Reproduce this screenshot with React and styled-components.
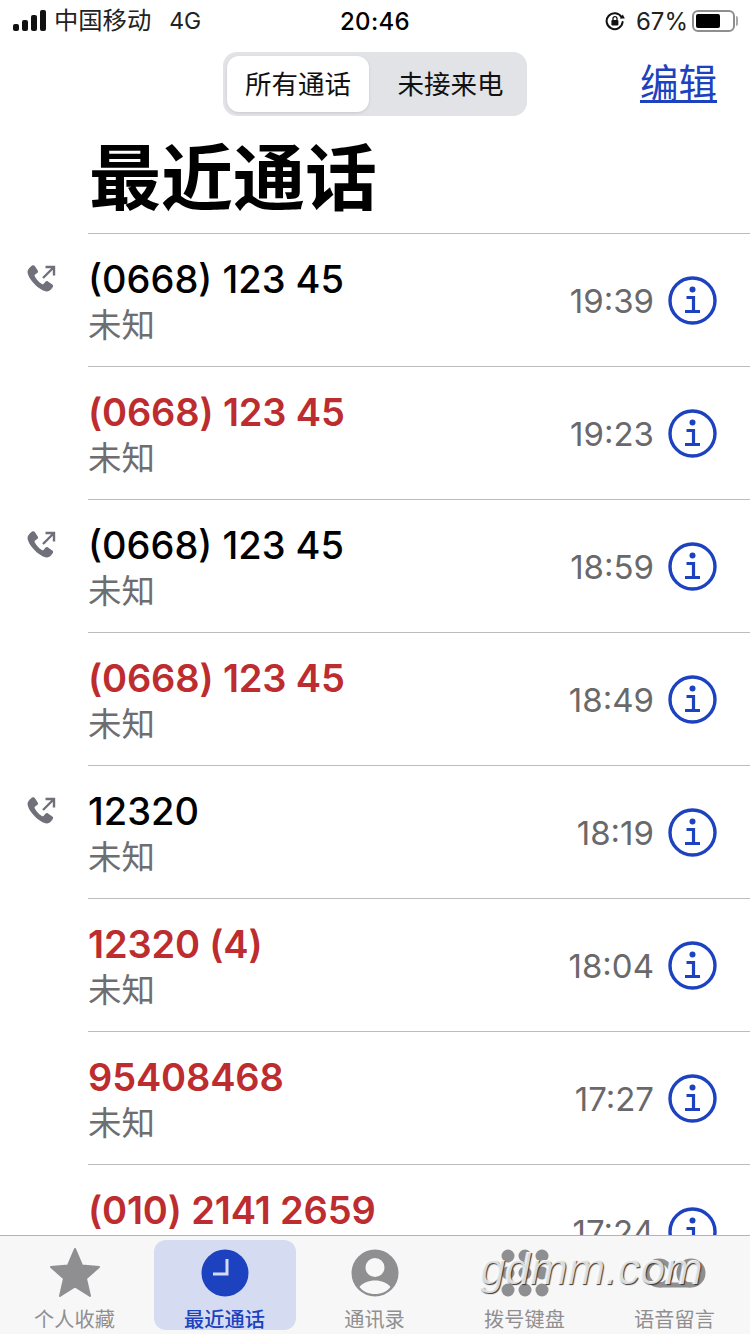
import styled, { createGlobalStyle } from "styled-components";

const GlobalStyle = createGlobalStyle`
  html, body {
    margin: 0;
    padding: 0;
    background: #fff;
  }
  * {
    box-sizing: border-box;
  }
`;

const FONT = `Inter, "Noto Sans CJK SC", sans-serif`;
const BLUE = "#1c42c0";
const RED = "#bd2c2e";

const CALLS = [
  { name: "(0668) 123 45", time: "19:39", outgoing: true },
  { name: "(0668) 123 45", time: "19:23", missed: true },
  { name: "(0668) 123 45", time: "18:59", outgoing: true },
  { name: "(0668) 123 45", time: "18:49", missed: true },
  { name: "12320", time: "18:19", outgoing: true },
  { name: "12320 (4)", time: "18:04", missed: true },
  { name: "95408468", time: "17:27", missed: true },
  { name: "(010) 2141 2659", time: "17:24", missed: true },
];

const Screen = styled.div`
  position: relative;
  display: flex;
  flex-direction: column;
  width: 750px;
  height: 1334px;
  overflow: hidden;
  background: #fff;
  font-family: ${FONT};
  color: #000;
`;

const StatusBar = styled.div`
  display: grid;
  grid-template-columns: 1fr auto 1fr;
  align-items: center;
  height: 42px;
  padding: 0 13px 0 13px;
  font-size: 24px;
`;

const StatusLeft = styled.div`
  display: flex;
  align-items: center;
`;

const Carrier = styled.span`
  margin: 0 0 5px 7px;
  font-size: 24.300px;
  color: #222;
`;

const Network = styled.span`
  margin-left: 18px;
  font-size: 23px;
  color: #222;
`;

const Clock = styled.span`
  font-size: 24px;
  font-weight: 500;
  letter-spacing: 0.3px;
`;

const StatusRight = styled.div`
  display: flex;
  align-items: center;
  justify-content: flex-end;
`;

const Percent = styled.span`
  margin: 0 4px 0 11px;
  font-size: 24px;
  color: #222;
`;

const Battery = styled.div`
  position: relative;
  width: 43px;
  height: 22px;
  padding: 2px;
  border: 2px solid #8e8e90;
  border-radius: 6px;
  margin-right: 2px;

  &::before {
    content: "";
    display: block;
    width: 24px;
    height: 14px;
    border-radius: 2px;
    background: #000;
  }

  &::after {
    content: "";
    position: absolute;
    top: 4px;
    right: -5px;
    width: 2px;
    height: 10px;
    border-radius: 0 2px 2px 0;
    background: #a8a8aa;
  }
`;

const NavBar = styled.div`
  display: flex;
  align-items: flex-start;
  height: 74px;
  padding: 10px 33px 0 223px;
  justify-content: space-between;
`;

const Segments = styled.div`
  display: flex;
  width: 304px;
  height: 64px;
  padding: 4px;
  border-radius: 14px;
  background: #e2e3e6;
`;

const Segment = styled.div`
  display: flex;
  align-items: center;
  justify-content: center;
  width: ${({ $active }) => ($active ? "142px" : "154px")};
  padding: ${({ $active }) => ($active ? "0 0 4px" : "0 0 4px 9px")};
  border-radius: 12px;
  font-size: 26.500px;
  color: #111;
  background: ${({ $active }) => ($active ? "#fff" : "transparent")};
  box-shadow: ${({ $active }) =>
    $active ? "0 1px 3px rgba(0, 0, 0, 0.12)" : "none"};
`;

const EditLink = styled.a`
  font-size: 38.500px;
  line-height: 63px;
  color: ${BLUE};
  text-decoration: underline;
  text-decoration-thickness: 3px;
  text-underline-offset: 3px;
`;

const Title = styled.h1`
  margin: 0;
  height: 117px;
  padding: 18px 0 0 89px;
  font-size: 72px;
  line-height: 88px;
  font-weight: 700;
`;

const List = styled.div`
  flex: 1;
  min-height: 0;
  overflow: hidden;
`;

const Row = styled.div`
  position: relative;
  display: flex;
  height: 133px;
  padding-left: 88px;
`;

const RowBody = styled.div`
  flex: 1;
  display: flex;
  align-items: center;
  justify-content: space-between;
  padding-right: 33px;
  border-top: 1.5px solid #bcbcbe;
`;

const CallIcon = styled.svg`
  position: absolute;
  left: 26px;
  top: 31px;
  width: 31px;
  height: 31px;
  color: #70707a;
`;

const CallText = styled.div`
  display: flex;
  flex-direction: column;
  margin-top: 2px;
`;

const CallName = styled.span`
  font-size: 38px;
  line-height: 47px;
  font-weight: ${({ $missed }) => ($missed ? 600 : 500)};
  letter-spacing: ${({ $missed }) => ($missed ? "-0.15px" : "0")};
  white-space: nowrap;
  color: ${({ $missed }) => ($missed ? RED : "#000")};
`;

const CallKind = styled.span`
  font-size: 33.500px;
  line-height: 44px;
  color: #6e6e70;
`;

const CallMeta = styled.div`
  display: flex;
  align-items: center;
  gap: 14px;
`;

const CallTime = styled.span`
  margin-top: 2px;
  font-size: 33px;
  color: #69696b;
`;

const InfoIcon = styled.svg`
  display: block;
  width: 49px;
  height: 49px;
  color: ${BLUE};
`;

const TabBar = styled.nav`
  display: grid;
  grid-template-columns: repeat(5, 150px);
  flex: none;
  height: 99px;
  background: #f7f7f7;
  border-top: 1.5px solid #b4b4b6;
  padding-top: 4px;
`;

const Tab = styled.div`
  display: flex;
  flex-direction: column;
  align-items: center;
  height: 90px;
  padding-top: 5px;
  width: 142px;
  margin-left: 4px;
  border-radius: 12px;
  background: ${({ $active }) => ($active ? "#d5dcf1" : "transparent")};
  color: ${({ $active }) => ($active ? BLUE : "#8f8f91")};
`;

const TabGlyph = styled.svg`
  display: block;
  width: ${({ $wide }) => ($wide ? "64px" : "56px")};
  height: 56px;
  flex: none;
`;

const TabLabel = styled.span`
  margin: 6px 1px 0 0;
  font-size: 20.200px;
  line-height: 26px;
  font-weight: ${({ $active }) => ($active ? 500 : 400)};
`;

const Watermark = styled.div`
  position: absolute;
  left: 480px;
  top: 1243px;
  font-family: "Liberation Sans", sans-serif;
  font-size: 45px;
  font-style: italic;
  color: rgba(250, 250, 250, 0.85);
  text-shadow: 1px 1px 1px #333, -1px 0 0 rgba(255, 255, 255, 0.8);
`;

const SignalIcon = () => (
  <svg width="34" height="22" viewBox="0 0 34 22" fill="#111">
    <rect x="0" y="14" width="6" height="7" rx="2" />
    <rect x="9" y="10" width="6" height="11" rx="2" />
    <rect x="18" y="5" width="6" height="16" rx="2" />
    <rect x="27" y="0" width="6" height="21" rx="2" />
  </svg>
);

const LockIcon = () => (
  <svg width="20" height="20" viewBox="0 0 20 20" fill="none">
    <path
      d="M16.600 6.200A8 8 0 1 0 17.600 11"
      stroke="#111"
      strokeWidth="2"
      strokeLinecap="round"
    />
    <path d="M14.800 7.400l5 .2-2-4.200z" fill="#111" />
    <rect x="6.400" y="9" width="7" height="5.400" rx="1" fill="#111" />
    <path d="M8 9V7.600a2 2 0 0 1 4 0V9" stroke="#111" strokeWidth="1.300" />
  </svg>
);

const OutgoingIcon = () => (
  <CallIcon viewBox="0 0 31 31" fill="currentColor">
    <path d="M6.200 1.600c.9-.6 2-.4 2.600.5l2.900 4.400c.6.9.4 1.900-.4 2.600L9 10.600c-.5.4-.6 1-.3 1.600 1.600 3 4 5.800 7.200 7.900.6.4 1.200.3 1.600-.2l1.900-2.200c.7-.8 1.800-.9 2.600-.3l4.300 3c.9.6 1.100 1.800.5 2.700-1.300 2-3.300 4.500-6 4.300C14 27.300 2.500 15.800 1.600 8.600 1.300 5.700 4.200 2.900 6.200 1.600z" />
    <path
      d="M17 14L27.500 3.500M19.500 3h8.500v8.500"
      fill="none"
      stroke="currentColor"
      strokeWidth="2.400"
    />
  </CallIcon>
);

const InfoGlyph = () => (
  <InfoIcon viewBox="0 0 49 49" fill="none">
    <circle cx="24.500" cy="24.500" r="22.500" stroke="currentColor" strokeWidth="3.400" />
    <circle cx="24.500" cy="13.500" r="3" fill="currentColor" />
    <path
      d="M18.500 21.500h7v13M17 35.500h15"
      stroke="currentColor"
      strokeWidth="3.200"
    />
  </InfoIcon>
);

const StarGlyph = () => (
  <TabGlyph viewBox="0 0 56 56" fill="currentColor">
    <path
      d="M28 4l7 16.500 17 1.500-13 11.500 4 17.500-15-9.500-15 9.500 4-17.500L4 22l17-1.500z"
      stroke="currentColor"
      strokeWidth="2"
      strokeLinejoin="round"
    />
  </TabGlyph>
);

const ClockGlyph = () => (
  <TabGlyph viewBox="0 0 56 56">
    <circle cx="28" cy="28" r="23.500" fill="currentColor" />
    <path d="M30 14v15H16" fill="none" stroke="#d5dcf1" strokeWidth="3" />
  </TabGlyph>
);

const PersonGlyph = () => (
  <TabGlyph viewBox="0 0 56 56" fill="currentColor">
    <path
      fillRule="evenodd"
      d="M28 4.500a23.500 23.500 0 1 1 0 47 23.500 23.500 0 0 1 0-47zM28 13a9.500 9.500 0 1 0 0 19 9.500 9.500 0 0 0 0-19zM12.500 42c3.500 4.500 9 7 15.500 7s12-2.500 15.500-7c-3-4-9-6.500-15.500-6.500S15.500 38 12.500 42z"
    />
  </TabGlyph>
);

const KeypadGlyph = () => (
  <TabGlyph viewBox="0 0 56 56" fill="currentColor">
    {[11, 28, 45].map((y) =>
      [11, 28, 45].map((x) => <circle key={`${x}-${y}`} cx={x} cy={y} r="6.500" />)
    )}
  </TabGlyph>
);

const VoicemailGlyph = () => (
  <TabGlyph $wide viewBox="0 0 64 56" fill="none">
    <circle cx="16" cy="28" r="12" stroke="currentColor" strokeWidth="5" />
    <circle cx="48" cy="28" r="12" stroke="currentColor" strokeWidth="5" />
    <path d="M16 40h32" stroke="currentColor" strokeWidth="5" />
  </TabGlyph>
);

const TABS = [
  { label: "个人收藏", Glyph: StarGlyph },
  { label: "最近通话", Glyph: ClockGlyph, active: true },
  { label: "通讯录", Glyph: PersonGlyph },
  { label: "拨号键盘", Glyph: KeypadGlyph },
  { label: "语音留言", Glyph: VoicemailGlyph },
];

const App = () => (
  <Screen>
    <GlobalStyle />
    <StatusBar>
      <StatusLeft>
        <SignalIcon />
        <Carrier>中国移动</Carrier>
        <Network>4G</Network>
      </StatusLeft>
      <Clock>20:46</Clock>
      <StatusRight>
        <LockIcon />
        <Percent>67%</Percent>
        <Battery />
      </StatusRight>
    </StatusBar>
    <NavBar>
      <Segments>
        <Segment $active>所有通话</Segment>
        <Segment>未接来电</Segment>
      </Segments>
      <EditLink>编辑</EditLink>
    </NavBar>
    <Title>最近通话</Title>
    <List>
      {CALLS.map((call, i) => (
        <Row key={i}>
          {call.outgoing && <OutgoingIcon />}
          <RowBody>
            <CallText>
              <CallName $missed={call.missed}>{call.name}</CallName>
              <CallKind>未知</CallKind>
            </CallText>
            <CallMeta>
              <CallTime>{call.time}</CallTime>
              <InfoGlyph />
            </CallMeta>
          </RowBody>
        </Row>
      ))}
    </List>
    <TabBar>
      {TABS.map(({ label, Glyph, active }) => (
        <Tab key={label} $active={active}>
          <Glyph />
          <TabLabel $active={active}>{label}</TabLabel>
        </Tab>
      ))}
    </TabBar>
    <Watermark>gdmm.com</Watermark>
  </Screen>
);

export default App;
